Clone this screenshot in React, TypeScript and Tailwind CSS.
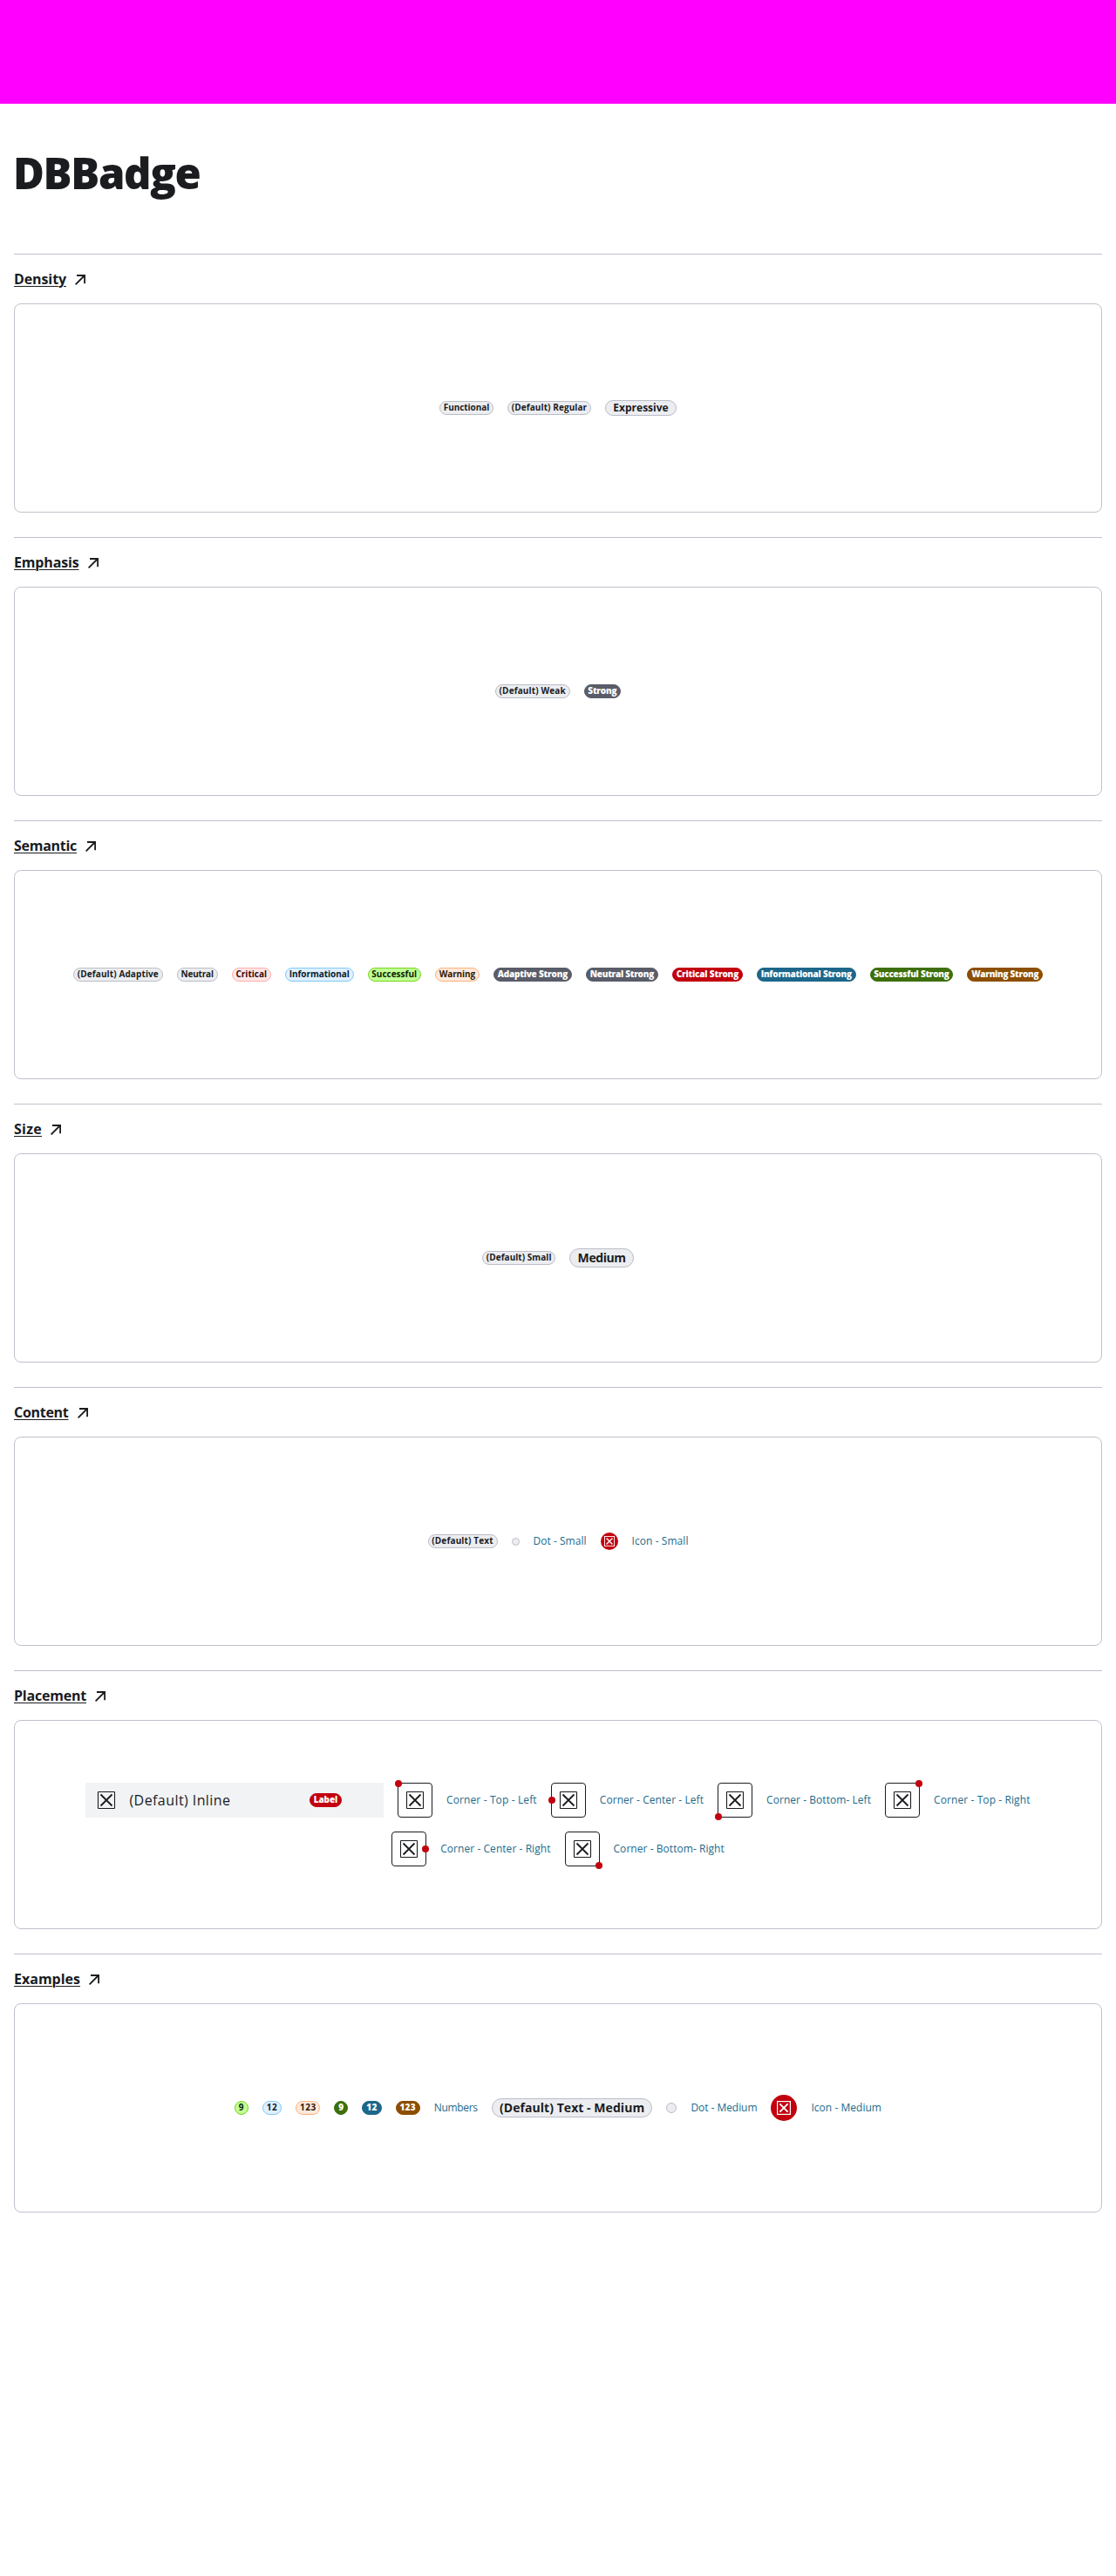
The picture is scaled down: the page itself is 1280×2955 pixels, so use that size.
import { useLayoutEffect, useRef, useState } from "react";
import type { ReactNode } from "react";

/** Text whose tracking is adjusted so that it fills the given advance width. */
function Fit({ text, width, className = "" }: { text: string; width: number; className?: string }) {
  const ref = useRef<HTMLSpanElement>(null);
  const [spacing, setSpacing] = useState(0);
  useLayoutEffect(() => {
    if (ref.current) {
      setSpacing((width - ref.current.getBoundingClientRect().width) / text.length);
    }
  }, [text, width]);
  return (
    <span ref={ref} className={`inline-block whitespace-nowrap ${className}`} style={{ letterSpacing: `${spacing}px` }}>
      {text}
    </span>
  );
}

const tones = {
  neutral: "bg-[#ecedf0] border-[#bbbec8] text-[#1a1c1f] font-bold",
  critical: "bg-[#ffe6e5] border-[#ffadad] text-[#39070a] font-bold",
  informational: "bg-[#e0efff] border-[#7ecbf7] text-[#07202c] font-bold",
  successful: "bg-[#c1ff95] border-[#76d51b] text-[#0f2303] font-bold",
  warning: "bg-[#ffe8dc] border-[#ffb37b] text-[#2d1905] font-bold",
  neutralStrong: "bg-[#5a5d69] border-[#5a5d69] text-white font-extrabold",
  criticalStrong: "bg-[#c2000f] border-[#c2000f] text-white font-extrabold",
  informationalStrong: "bg-[#1d678a] border-[#1d678a] text-white font-extrabold",
  successfulStrong: "bg-[#3e6f0a] border-[#3e6f0a] text-white font-extrabold",
  warningStrong: "bg-[#8c4f00] border-[#8c4f00] text-white font-extrabold",
};
type Tone = keyof typeof tones;

const sizes = {
  small: { box: "h-4 text-[10px] leading-[13px]", pad: 9.6 },
  large: { box: "h-[18px] text-[12px] leading-[16px]", pad: 18.6 },
  medium: { box: "h-[22px] text-[14px] leading-[20px]", pad: 18.6 },
};

function Badge({ text, w, tone = "neutral", size = "small" }: { text: string; w: number; tone?: Tone; size?: keyof typeof sizes }) {
  const s = sizes[size];
  return (
    <span
      className={`flex shrink-0 items-start justify-center rounded-full border ${s.box} ${tones[tone]}`}
      style={{ width: w }}
    >
      <Fit text={text} width={w - s.pad} />
    </span>
  );
}

function Label({ text, w }: { text: string; w: number }) {
  return (
    <span className="shrink-0 text-[12px] leading-4 text-[#1d6a8b]" style={{ width: w }}>
      <Fit text={text} width={w} />
    </span>
  );
}

function Cross({ className }: { className: string }) {
  return (
    <svg viewBox="0 0 24 24" className={className} fill="none" stroke="currentColor">
      <rect x="2.5" y="2.5" width="19" height="19" rx="0.5" strokeWidth="1.1" />
      <path d="M5.5 5.5l13 13M18.5 5.5l-13 13" strokeWidth="1.8" />
    </svg>
  );
}

function SmallCross({ className }: { className: string }) {
  return (
    <svg viewBox="0 0 16 16" className={className} fill="none" stroke="currentColor">
      <rect x="0.6" y="0.6" width="14.8" height="14.8" strokeWidth="1.2" />
      <path d="M3.4 3.4l9.2 9.2M12.6 3.4l-9.2 9.2" strokeWidth="1.9" />
    </svg>
  );
}

const corners = {
  tl: "left-[-4px] top-[-4px]",
  cl: "left-[-4px] top-[15px]",
  bl: "left-[-4px] bottom-[-4px]",
  tr: "right-[-4px] top-[-4px]",
  cr: "right-[-4px] top-[15px]",
  br: "right-[-4px] bottom-[-4px]",
};

function Corner({ at, text, w }: { at: keyof typeof corners; text: string; w: number }) {
  return (
    <div className="flex items-center gap-4">
      <span className="relative flex size-10 items-center justify-center rounded-[4px] border border-[#1a1c1f] text-[#1a1c1f]">
        <Cross className="size-6" />
        <span className={`absolute size-2 rounded-full bg-[#c2000f] ${corners[at]}`} />
      </span>
      <Label text={text} w={w} />
    </div>
  );
}

function Section({ title, w, children }: { title: string; w: number; children: ReactNode }) {
  return (
    <section className="mb-7 border-t border-[#bfc2cc]">
      <h2 className="flex h-14 items-center gap-[10px] text-[16px] font-bold leading-6">
        <Fit
          text={title}
          width={w}
          className="underline decoration-1 underline-offset-2"
        />
        <svg viewBox="0 0 12 12" className="mt-px size-3" fill="none" stroke="currentColor" strokeWidth="1.8">
          <path d="M0.6 11.4L11 1M2 1h9.1v9.2" />
        </svg>
      </h2>
      <div className="flex h-60 flex-wrap content-center items-center justify-center gap-4 rounded-lg border border-[#bfc2cc]">
        {children}
      </div>
    </section>
  );
}

export default function App() {
  return (
    <div className="min-h-[2955px] bg-white font-['Open_Sans',sans-serif] text-[#1a1c1f]">
      <div className="h-[119px] bg-[#ff00ff]" />
      <main className="px-4">
        <h1 className="flex h-[172px] items-center pb-[14px] text-[49px] font-extrabold leading-[64px]">
          <Fit text="DBBadge" width={214.5} className="-ml-px" />
        </h1>

        <Section title="Density" w={60}>
          <Badge text="Functional" w={62} />
          <Badge text="(Default) Regular" w={96} />
          <Badge text="Expressive" w={82} size="large" />
        </Section>

        <Section title="Emphasis" w={74.5}>
          <Badge text="(Default) Weak" w={85.7} />
          <Badge text="Strong" w={42.7} tone="neutralStrong" />
        </Section>

        <Section title="Semantic" w={72}>
          <Badge text="(Default) Adaptive" w={102.7} />
          <Badge text="Neutral" w={47} />
          <Badge text="Critical" w={45.2} tone="critical" />
          <Badge text="Informational" w={78.7} tone="informational" />
          <Badge text="Successful" w={61.3} tone="successful" />
          <Badge text="Warning" w={51} tone="warning" />
          <Badge text="Adaptive Strong" w={90} tone="neutralStrong" />
          <Badge text="Neutral Strong" w={83} tone="neutralStrong" />
          <Badge text="Critical Strong" w={81} tone="criticalStrong" />
          <Badge text="Informational Strong" w={113.7} tone="informationalStrong" />
          <Badge text="Successful Strong" w={95.8} tone="successfulStrong" />
          <Badge text="Warning Strong" w={86.7} tone="warningStrong" />
        </Section>

        <Section title="Size" w={32}>
          <Badge text="(Default) Small" w={84.3} />
          <Badge text="Medium" w={73.7} size="medium" />
        </Section>

        <Section title="Content" w={62.5}>
          <Badge text="(Default) Text" w={80} />
          <span className="size-[9px] rounded-full border border-[#bbbec8] bg-[#ecedf0]" />
          <Label text="Dot - Small" w={61} />
          <span className="flex size-5 items-center justify-center rounded-full bg-[#c2000f] text-white">
            <SmallCross className="size-3" />
          </span>
          <Label text="Icon - Small" w={65} />
        </Section>

        <Section title="Placement" w={83}>
          <div className="flex h-10 w-[341.5px] items-center bg-[#f2f3f5] pl-3">
            <Cross className="size-6" />
            <span className="ml-[14px] w-[206.5px] text-[16px] leading-6">
              <Fit text="(Default) Inline" width={116} />
            </span>
            <Badge text="Label" w={37} tone="criticalStrong" />
          </div>
          <Corner at="tl" text="Corner - Top - Left" w={103.8} />
          <Corner at="cl" text="Corner - Center - Left" w={119.3} />
          <Corner at="bl" text="Corner - Bottom- Left" w={120} />
          <Corner at="tr" text="Corner - Top - Right" w={110.5} />
          <Corner at="cr" text="Corner - Center - Right" w={126.3} />
          <Corner at="br" text="Corner - Bottom- Right" w={127.3} />
        </Section>

        <Section title="Examples" w={76}>
          <Badge text="9" w={16} tone="successful" />
          <Badge text="12" w={22.2} tone="informational" />
          <Badge text="123" w={28.2} tone="warning" />
          <Badge text="9" w={16} tone="successfulStrong" />
          <Badge text="12" w={22.2} tone="informationalStrong" />
          <Badge text="123" w={28.2} tone="warningStrong" />
          <Label text="Numbers" w={50} />
          <Badge text="(Default) Text - Medium" w={184.7} size="medium" />
          <span className="size-3 rounded-full border border-[#bbbec8] bg-[#ecedf0]" />
          <Label text="Dot - Medium" w={76} />
          <span className="flex size-[30px] items-center justify-center rounded-full bg-[#c2000f] text-white">
            <SmallCross className="size-4" />
          </span>
          <Label text="Icon - Medium" w={80.5} />
        </Section>
      </main>
    </div>
  );
}
